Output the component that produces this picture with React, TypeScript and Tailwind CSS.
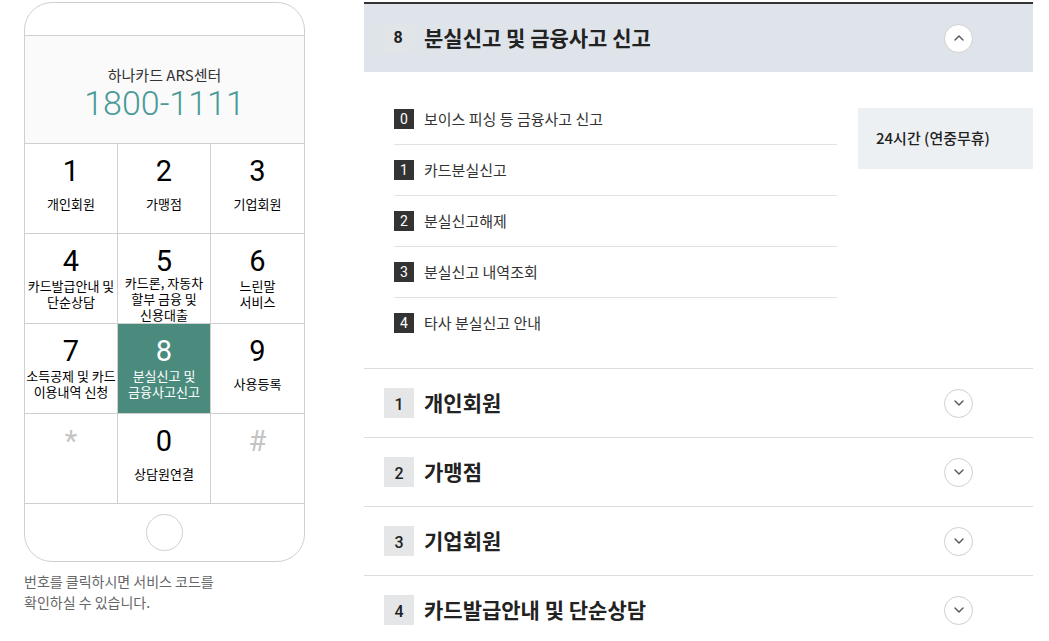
import React from "react";

const keys = [
  { num: "1", label: ["개인회원"] },
  { num: "2", label: ["가맹점"] },
  { num: "3", label: ["기업회원"] },
  { num: "4", label: ["카드발급안내 및", "단순상담"] },
  { num: "5", label: ["카드론, 자동차", "할부 금융 및", "신용대출"] },
  { num: "6", label: ["느린말", "서비스"] },
  { num: "7", label: ["소득공제 및 카드", "이용내역 신청"] },
  { num: "8", label: ["분실신고 및", "금융사고신고"], active: true },
  { num: "9", label: ["사용등록"] },
  { num: "*", label: [], muted: true },
  { num: "0", label: ["상담원연결"] },
  { num: "#", label: [], muted: true },
];

const subItems = [
  { code: "0", name: "보이스 피싱 등 금융사고 신고" },
  { code: "1", name: "카드분실신고" },
  { code: "2", name: "분실신고해제" },
  { code: "3", name: "분실신고 내역조회" },
  { code: "4", name: "타사 분실신고 안내" },
];

const sections = [
  { code: "1", title: "개인회원" },
  { code: "2", title: "가맹점" },
  { code: "3", title: "기업회원" },
  { code: "4", title: "카드발급안내 및 단순상담" },
];

function Chevron({ up }: { up?: boolean }) {
  return (
    <span className="flex h-[29px] w-[29px] items-center justify-center rounded-full border border-[#cfcfcf] bg-white">
      <svg width="10" height="6" viewBox="0 0 10 6" fill="none">
        <path
          d={up ? "M1 5l4-4 4 4" : "M1 1l4 4 4-4"}
          stroke="#555"
          strokeWidth="1.4"
          strokeLinecap="round"
          strokeLinejoin="round"
        />
      </svg>
    </span>
  );
}

function Phone() {
  return (
    <div className="w-[281px] shrink-0">
      <div className="overflow-hidden rounded-[28px] border border-[#cfcfcf] bg-white">
        <div className="h-[33px] border-b border-[#cfcfcf]" />
        <div className="flex h-[107px] flex-col items-center justify-center bg-[#fafafa] pt-[7px]">
          <p className="text-[15px] leading-[19px] text-[#333]">하나카드 ARS센터</p>
          <p className="font-['Roboto',sans-serif] text-[34px] font-light leading-[38px] text-[#4a9b97]">
            1800-1111
          </p>
        </div>
        <div className="grid grid-cols-[93px_93px_93px] border-t border-[#cfcfcf]">
          {keys.map((k, i) => (
            <div
              key={k.num}
              className={`flex h-[90px] flex-col items-center border-b border-[#cfcfcf] pt-[13px] ${
                i % 3 !== 2 ? "border-r" : ""
              } ${k.active ? "bg-[#4b8b7d] text-white" : "text-black"}`}
            >
              <span
                className={`font-['Roboto',sans-serif] text-[29px] leading-[28px] ${
                  k.muted ? "text-[#c4c4c4]" : ""
                } ${k.num === "*" ? "text-[24px]" : ""}`}
              >
                {k.num}
              </span>
              <div
                className={`flex flex-col items-center text-center text-[13px] leading-[16px] ${
                  k.label.length > 2 ? "" : "mt-[2px] h-[34px] justify-center"
                }`}
              >
                {k.label.map((l) => (
                  <span key={l} className="whitespace-nowrap">
                    {l}
                  </span>
                ))}
              </div>
            </div>
          ))}
        </div>
        <div className="flex h-[57px] items-center justify-center">
          <span className="h-[37px] w-[37px] rounded-full border border-[#cfcfcf]" />
        </div>
      </div>
      <p className="mt-[9px] text-[14px] leading-[21px] text-[#666]">
        번호를 클릭하시면 서비스 코드를
        <br />
        확인하실 수 있습니다.
      </p>
    </div>
  );
}

export default function App() {
  return (
    <div className="flex w-[1049px] gap-[59px] bg-white pl-[24px] pt-[2px] font-['Noto_Sans_CJK_KR','Noto_Sans',sans-serif] text-[#222]">
      <Phone />
      <div className="w-[669px] border-t-[2px] border-[#333]">
        <div className="flex h-[68px] items-center bg-[#dfe4ea] pl-[18px] pr-[60px]">
          <span className="flex h-[29px] w-[32px] items-center justify-center bg-[#e2e5e8] font-['Roboto',sans-serif] text-[16px] font-bold">
            8
          </span>
          <span className="ml-[10px] text-[21px] font-bold">분실신고 및 금융사고 신고</span>
          <span className="ml-auto">
            <Chevron up />
          </span>
        </div>
        <div className="flex border-b border-[#ddd] pb-[20px] pt-[22px]">
          <ul className="ml-[30px] w-[443px]">
            {subItems.map((s, i) => (
              <li
                key={s.code}
                className={`flex items-center py-[15px] ${
                  i < subItems.length - 1 ? "border-b border-[#e2e2e2]" : ""
                }`}
              >
                <span className="flex h-[20px] w-[20px] items-center justify-center bg-[#333] font-['Roboto',sans-serif] text-[14px] text-white">
                  {s.code}
                </span>
                <span className="ml-[10px] text-[15px] leading-[20px] text-[#333]">{s.name}</span>
              </li>
            ))}
          </ul>
          <div className="ml-auto mt-[14px] flex h-[61px] w-[175px] items-center bg-[#edf0f3] pl-[18px] text-[15px] font-medium text-[#222]">
            24시간 (연중무휴)
          </div>
        </div>
        {sections.map((s) => (
          <div
            key={s.code}
            className="flex h-[69px] items-center border-b border-[#ddd] pl-[20px] pr-[60px]"
          >
            <span className="flex h-[30px] w-[30px] items-center justify-center bg-[#e4e6e8] pt-[3px] font-['Roboto',sans-serif] text-[16px] font-medium">
              {s.code}
            </span>
            <span className="ml-[10px] text-[21px] font-bold">{s.title}</span>
            <span className="ml-auto">
              <Chevron />
            </span>
          </div>
        ))}
      </div>
    </div>
  );
}
